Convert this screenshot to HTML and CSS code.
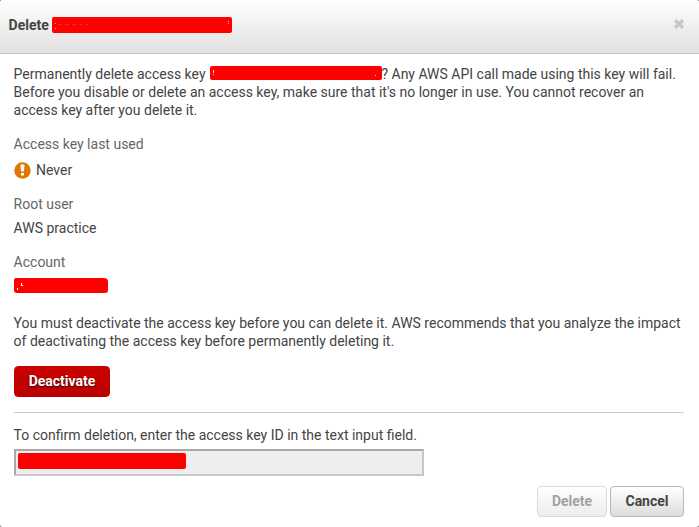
FILE: index.html
```
<!DOCTYPE html>
<html lang="en">
<head>
<meta charset="utf-8">
<title>Delete access key</title>
<link rel="stylesheet" href="styles.css">
</head>
<body>
<div class="backdrop">
<div class="dialog">
  <header class="header">
    <h1 class="title">Delete <span class="redacted redacted-title"><svg width="180" height="16"><path d="M3 6.5h1M3 11.5h1M176 6.5h1M176 4.5h1" stroke="#f99"/><path d="M6 7.5h30" stroke="#f22" stroke-dasharray="4 3"/></svg></span></h1>
    <button class="close" aria-label="Close"><svg width="12" height="10" viewBox="0 0 12 10"><path d="M2 1.3 10 8.7M10 1.3 2 8.7" stroke="#c8c8c8" stroke-width="3.6"/></svg></button>
  </header>
  <main class="content">
    <p class="intro">Permanently delete access key <span class="redacted redacted-key"><svg width="172" height="14"><path d="M3.5 4v3M3.5 8v1M165.500 9v1" stroke="#fcc"/></svg></span>? Any AWS API call made using this key will fail.<br>Before you disable or delete an access key, make sure that it's no longer in use. You cannot recover an<br>access key after you delete it.</p>
    <dl class="details">
      <div class="detail detail-used">
        <dt>Access key last used</dt>
        <dd><svg class="warning" width="17" height="17" viewBox="0 0 17 17"><circle cx="8.500" cy="8.500" r="8.200" fill="#e07700"/><path d="M6.500 2.500h4l-.5 7H7zM7 11h3v2.500H7z" fill="#fff"/></svg>Never</dd>
      </div>
      <div class="detail"><dt>Root user</dt><dd>AWS practice</dd></div>
      <div class="detail"><dt>Account</dt><dd><span class="redacted redacted-account"><svg width="94" height="15"><path d="M3.500 10v2M7.500 5v3M8.500 7v1" stroke="#fff"/></svg></span></dd></div>
    </dl>
    <p class="advice">You must deactivate the access key before you can delete it. AWS recommends that you analyze the impact of deactivating the access key before permanently deleting it.</p>
    <button class="button danger">Deactivate</button>
    <hr class="rule">
    <p class="confirm">To confirm deletion, enter the access key ID in the text input field.</p>
    <div class="field"><span class="redacted redacted-input"></span></div>
  </main>
  <footer class="footer">
    <button class="button delete" disabled>Delete</button>
    <button class="button cancel">Cancel</button>
  </footer>
</div>
</div>
</body>
</html>
```
FILE: styles.css
```
* { box-sizing: border-box; }
body {
  margin: 0;
  font: 14px/18px Roboto, "Liberation Sans", sans-serif;
  color: #444;
}
p, h1, dl, dd { margin: 0; }
.backdrop { background: #888; height: 527px; overflow: hidden; }
.dialog { height: 527px; background: #fff; border-radius: 3px; overflow: hidden; }
.header {
  display: flex;
  align-items: center;
  justify-content: space-between;
  height: 54px;
  padding: 0 14px 3px 8.6px;
  border-bottom: 1px solid #c4c4c4;
  background: linear-gradient(#fff, #e0e0e0);
}
.title { display: flex; align-items: center; gap: 3px; font-size: 14px; font-weight: 700; }
.close { display: flex; padding: 0; border: 0; background: none; margin-top: -3px; }
.redacted { display: inline-block; background: #f00; border-radius: 2px; }
.redacted svg { display: block; }
.redacted-title { width: 180px; height: 16px; }
.redacted-key { width: 172px; height: 14px; vertical-align: -1px; margin-left: 1px; margin-right: -0.6px; }
.redacted-account { width: 94px; height: 15px; margin-top: -1px; border-radius: 2px 4px 3px 3px; }
.redacted-input { width: 168px; height: 16px; }
.content { padding: 11px 15px 0 13.6px; }
.intro { margin-bottom: 16px; }
.detail { margin-bottom: 16px; }
.detail dt { color: #666; margin-bottom: 6px; }
.detail dd { display: flex; align-items: center; height: 18px; }
.detail-used dt { margin-bottom: 8px; }
.warning { margin: 0 5px 0 0.4px; }
.advice { padding-top: 3px; margin-bottom: 16px; }
.button {
  height: 31px;
  padding: 0 14px;
  border: 1px solid #b8b8b8;
  border-radius: 4px;
  font: 700 14px/18px Roboto, "Liberation Sans", sans-serif;
  color: #444;
  background: linear-gradient(#fff, #ddd);
}
.danger {
  display: block;
  width: 96px;
  padding: 0 0 1px;
  margin-left: 0.4px;
  border-color: #b00;
  color: #fff;
  background: linear-gradient(#c00, #b00);
  text-shadow: 0 1px 2px #300;
}
.rule { height: 1px; margin: 15px 0 13px 0.4px; border: 0; background: #ccc; }
.confirm { margin-bottom: 5px; }
.field {
  display: flex;
  width: 410px;
  height: 27px;
  margin-left: 0.4px;
  padding: 2px;
  border: 2px solid;
  border-color: #aaa #c8c8c8 #c8c8c8 #aaa;
  background: #eee;
}
.footer { display: flex; justify-content: flex-end; gap: 3px; padding: 10px 15px 0; }
.delete { width: 70px; padding: 0 0 1px; opacity: .5; }
.cancel { width: 74px; padding: 0 0 1px; }
```
